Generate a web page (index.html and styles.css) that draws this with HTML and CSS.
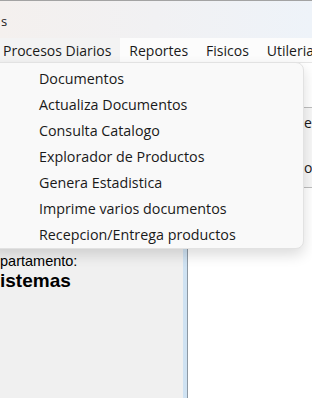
FILE: index.html
```html
<!DOCTYPE html>
<html lang="es">
<head>
<meta charset="utf-8">
<link rel="stylesheet" href="styles.css">
</head>
<body>
<div class="window">
  <div class="titlebar"><span class="title">s</span></div>
  <div class="menubar">
    <span class="menu-item active">Procesos Diarios</span>
    <span class="menu-item">Reportes</span>
    <span class="menu-item">Fisicos</span>
    <span class="menu-item">Utileria</span>
  </div>
  <div class="content">
    <div class="left-panel">
      <div class="dept-label">partamento:</div>
      <div class="dept-value">istemas</div>
    </div>
    <div class="splitter"></div>
    <div class="right-panel">
      <div class="side-box">
        <div class="side-text first">es</div>
        <div class="side-text">os</div>
      </div>
    </div>
  </div>
  <div class="dropdown">
    <div class="dd-item">Documentos</div>
    <div class="dd-item">Actualiza Documentos</div>
    <div class="dd-item">Consulta Catalogo</div>
    <div class="dd-item">Explorador de Productos</div>
    <div class="dd-item">Genera Estadistica</div>
    <div class="dd-item">Imprime varios documentos</div>
    <div class="dd-item">Recepcion/Entrega productos</div>
  </div>
</div>
</body>
</html>
```
FILE: styles.css
```css
* { box-sizing: border-box; }
html, body { margin: 0; padding: 0; }
body {
  width: 312px;
  height: 398px;
  overflow: hidden;
  font-family: "Open Sans", "Noto Sans", sans-serif;
  color: #1a1a1a;
  background: #ffffff;
}
.window {
  position: relative;
  width: 312px;
  height: 398px;
  overflow: hidden;
  display: flex;
  flex-direction: column;
}
.titlebar {
  height: 38px;
  flex: none;
  border-top: 1px solid #a3a3a3;
  background: linear-gradient(90deg, #f4f0ee 0%, #f1f1f3 50%, #eef3f9 100%);
  display: flex;
  align-items: center;
  padding-left: 1px;
  font-size: 13px;
  color: #1a1a1a;
}
.title { margin-top: 2px; }
.menubar {
  height: 24px;
  flex: none;
  display: flex;
  background: #fcfcfc;
  font-size: 14px;
}
.menu-item {
  display: flex;
  align-items: center;
  padding: 0 9px;
  white-space: nowrap;
}
.menu-item.active {
  background: #f3f3f3;
  padding-left: 3px;
  width: 121px;
}
.content {
  flex: 1;
  display: flex;
  min-height: 0;
  border-top: 1px solid #e6e6e6;
}
.left-panel {
  width: 183px;
  flex: none;
  background: #f0f0f0;
  padding-top: 190px;
  overflow: hidden;
  font-family: "Liberation Sans", Arial, sans-serif;
  color: #000;
}
.dept-label {
  font-size: 14.5px;
  line-height: 16px;
}
.dept-value {
  font-size: 19px;
  font-weight: bold;
  line-height: 23px;
}
.splitter {
  width: 5px;
  flex: none;
  background: #cfe2f2;
  border-right: 1px solid #8d98a3;
}
.right-panel {
  flex: 1;
  background: #ffffff;
  position: relative;
}
.side-box {
  margin-left: 115px;
  margin-top: 44px;
  height: 81px;
  border-top: 1px solid #bdbdbd;
  border-bottom: 1px solid #bdbdbd;
  background: #f7f7f7;
  font-size: 14px;
  padding-left: 1px;
}
.side-text { line-height: 18px; color: #1a1a1a; }
.side-text.first { margin-top: 6px; margin-bottom: 27px; }
.dropdown {
  position: absolute;
  left: -12px;
  top: 62px;
  width: 316px;
  height: 187px;
  background: #f9f9f9;
  border: 1px solid #e2e2e2;
  border-radius: 8px;
  box-shadow: 0 6px 14px rgba(0, 0, 0, 0.14);
  padding-top: 2px;
  padding-left: 50px;
  font-size: 14.3px;
}
.dd-item {
  height: 26.15px;
  display: flex;
  align-items: center;
  white-space: nowrap;
}
```
